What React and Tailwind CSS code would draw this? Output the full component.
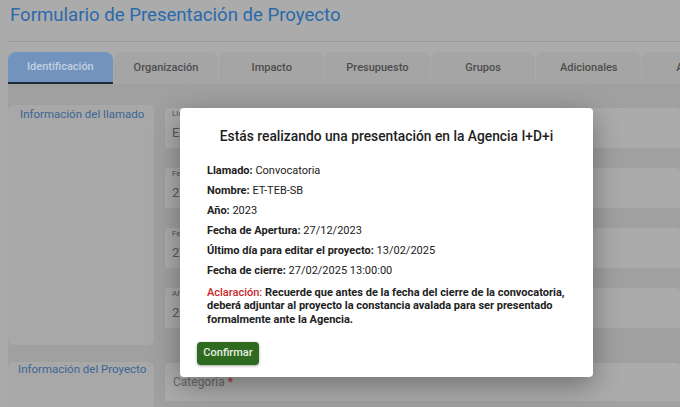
const tabs = [
  "Identificación",
  "Organización",
  "Impacto",
  "Presupuesto",
  "Grupos",
  "Adicionales",
  "Anexos",
];

const Field = ({ label, value }) => (
  <div className="h-[40px] rounded-t-[4px] bg-[#ababab] pl-[7px]">
    <div className="pt-[1px] text-[8px] leading-[10px] text-[#555]">{label}</div>
    <div className="mt-[6px] text-[13px] leading-[16px] text-[#5a5a5a]">{value}</div>
  </div>
);

const Row = ({ label, value }) => (
  <p className="h-[20px] leading-[20px]">
    <span className="font-bold">{label}</span> {value}
  </p>
);

const App = () => {
  return (
    <div className="relative h-[407px] w-[680px] overflow-hidden bg-[#ababab] font-['Roboto',sans-serif]">
      <h1 className="pl-[10px] pt-[3px] text-[18.6px] leading-[24px] text-[#2a6aab]">
        Formulario de Presentación de Proyecto
      </h1>
      <div className="ml-2 mt-[14px] border-t border-[#999]" />

      <div className="ml-2 mt-[10px] flex gap-px">
        {tabs.map((t, i) => (
          <div
            key={t}
            className={
              i === 0
                ? "flex h-[32px] w-[104.7px] shrink-0 items-center justify-center rounded-t-[8px] border-b-2 border-[#1b2b3c] bg-[#7193be] text-[11px] font-medium text-[#c3d0e0]"
                : "flex h-[32px] w-[104.7px] shrink-0 items-center justify-center rounded-t-[8px] bg-[#a5a5a5] text-[11px] font-medium text-[#4d4d4d]"
            }
          >
            {t}
          </div>
        ))}
      </div>

      <div className="ml-2 bg-[#a0a0a0] pt-[21px]">
        <div className="flex gap-[11px]">
          <div className="h-[240px] w-[146px] shrink-0 whitespace-nowrap rounded-[6px] bg-[#a8a8a8] px-3 pt-[1px] text-[11.5px] leading-[16px] text-[#3b6695]">
            Información del llamado
          </div>
          <div className="flex flex-1 flex-col gap-[20px] pt-[3px]">
            <Field label="Llamado" value="ET-TEB-SB" />
            <Field label="Fecha de Apertura" value="27/12/2023" />
            <Field label="Fecha de cierre" value="27/02/2025" />
            <Field label="Año" value="2023" />
          </div>
        </div>
        <div className="mt-[17px] flex gap-[11px]">
          <div className="h-[50px] w-[146px] shrink-0 whitespace-nowrap rounded-t-[6px] bg-[#a8a8a8] px-[10px] pt-0 text-[11.5px] leading-[14px] text-[#3b6695]">
            Información del Proyecto
          </div>
          <div className="mt-[1px] h-[38px] flex-1 rounded-t-[4px] bg-[#ababab] pl-[8px] pt-[11px] text-[12px] leading-[16px] text-[#6a6a6a]">
            Categoría <span className="text-[#a83232]">*</span>
          </div>
        </div>
      </div>

      <div className="absolute left-[180px] top-[108px] h-[269px] w-[413px] rounded-[4px] bg-white shadow-[0_8px_28px_rgba(0,0,0,0.35)]">
        <h2 className="pt-[19px] text-center text-[13.8px] font-medium leading-[18px] text-[#1e1e1e]">
          Estás realizando una presentación en la Agencia I+D+i
        </h2>
        <div className="mt-[16px] pl-[27px] pr-[18px] text-[11px] text-[#222]">
          <Row label="Llamado:" value="Convocatoria" />
          <Row label="Nombre:" value="ET-TEB-SB" />
          <Row label="Año:" value="2023" />
          <Row label="Fecha de Apertura:" value="27/12/2023" />
          <Row label="Último día para editar el proyecto:" value="13/02/2025" />
          <Row label="Fecha de cierre:" value="27/02/2025 13:00:00" />
          <p className="mt-[5px] whitespace-nowrap font-bold leading-[13.3px]">
            <span className="font-medium text-[#c62828]">Aclaración:</span> Recuerde que antes de la fecha del cierre de la convocatoria,
            <br />
            deberá adjuntar al proyecto la constancia avalada para ser presentado
            <br />
            formalmente ante la Agencia.
          </p>
        </div>
        <div className="mt-[13px] px-[17px]">
          <button className="h-[23px] w-[62px] rounded-[4px] bg-[#2e6a20] text-[11px] font-medium text-[#e8f0e2] shadow-[0_1px_3px_rgba(0,0,0,0.35)]">
            Confirmar
          </button>
        </div>
      </div>
    </div>
  );
};

export default App;
